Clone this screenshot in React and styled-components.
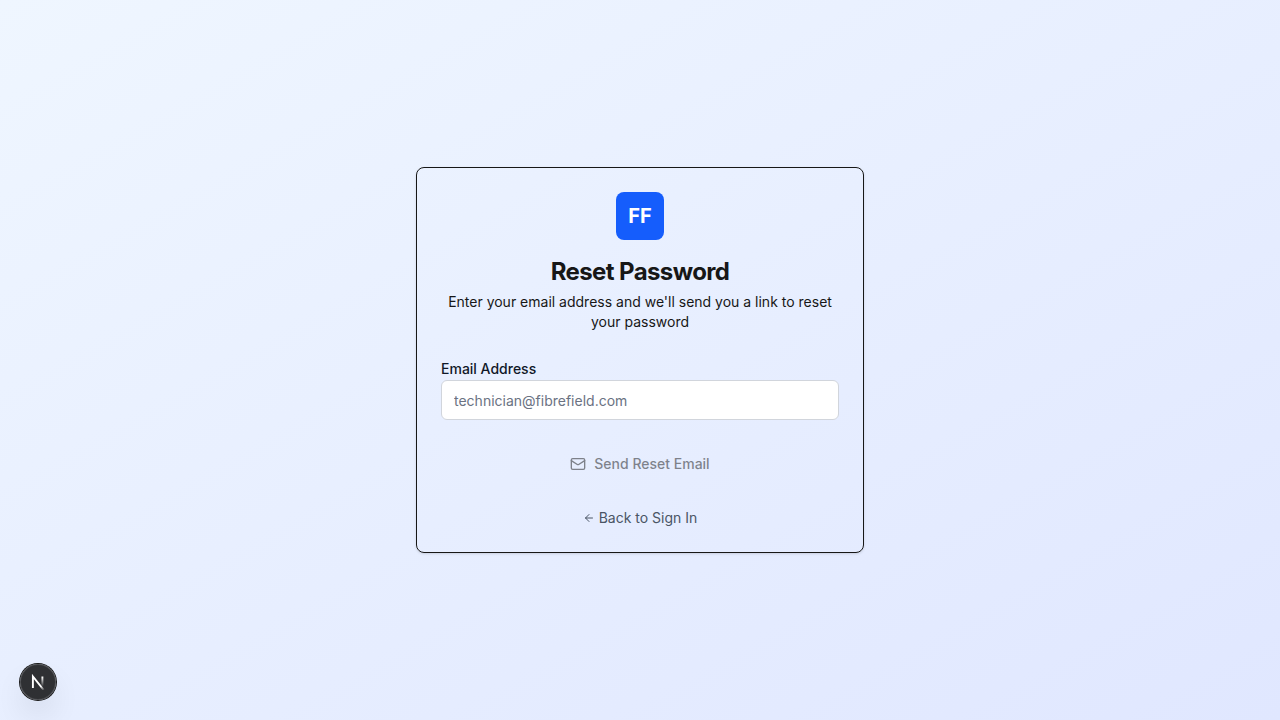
import React, { useState } from "react";
import styled, { createGlobalStyle } from "styled-components";
import { Mail, ArrowLeft } from "lucide-react";

const GlobalStyle = createGlobalStyle`
  *, *::before, *::after { box-sizing: border-box; }
  body {
    margin: 0;
    font-family: Inter, "Liberation Sans", sans-serif;
    font-size: 16px;
    line-height: 24px;
    color: #171717;
  }
`;

const Page = styled.main`
  min-height: 100vh;
  display: flex;
  align-items: center;
  justify-content: center;
  padding: 16px;
  background: linear-gradient(to bottom right, #eff6ff, #e0e7ff);
`;

const Card = styled.section`
  width: 100%;
  max-width: 448px;
  border: 1px solid #171717;
  border-radius: 8px;
  box-shadow: 0 1px 3px rgba(0, 0, 0, 0.1), 0 1px 2px -1px rgba(0, 0, 0, 0.1);
`;

const CardHeader = styled.header`
  display: flex;
  flex-direction: column;
  align-items: center;
  padding: 24px;
  text-align: center;
`;

const Logo = styled.div`
  display: flex;
  align-items: center;
  justify-content: center;
  width: 48px;
  height: 48px;
  margin-bottom: 16px;
  border-radius: 8px;
  background: #155dfc;
  color: #fff;
  font-size: 20px;
  line-height: 28px;
  font-weight: 700;
`;

const Title = styled.h1`
  margin: 0 0 4px;
  font-size: 24px;
  line-height: 32px;
  font-weight: 700;
  letter-spacing: -0.025em;
`;

const Description = styled.p`
  margin: 0;
  font-size: 14px;
  line-height: 20px;
`;

const CardBody = styled.div`
  display: flex;
  flex-direction: column;
  gap: 24px;
  padding: 0 24px 24px;
`;

const Form = styled.form`
  display: flex;
  flex-direction: column;
  gap: 24px;
`;

const Field = styled.div`
  display: flex;
  flex-direction: column;
  align-items: flex-start;
  padding-top: 2px;
`;

const Label = styled.label`
  font-size: 14px;
  line-height: 22px;
  font-weight: 500;
  color: #101828;
`;

const Input = styled.input`
  width: 100%;
  height: 40px;
  padding: 8px 12px;
  border: 1px solid #d1d5dc;
  border-radius: 6px;
  background: #fff;
  color: #171717;
  font: inherit;
  font-size: 14px;
  line-height: 20px;
  &::placeholder { color: #6a7282; opacity: 1; }
`;

const SubmitButton = styled.button`
  display: flex;
  align-items: center;
  justify-content: center;
  gap: 8px;
  width: 100%;
  height: 40px;
  padding: 8px 16px;
  border: 0;
  border-radius: 6px;
  background: transparent;
  color: #171717;
  font: inherit;
  font-size: 14px;
  line-height: 20px;
  font-weight: 500;
  &:disabled { opacity: 0.5; }
`;

const BackLink = styled.a`
  display: inline-flex;
  align-items: center;
  align-self: center;
  gap: 4px;
  color: #4a5565;
  font-size: 14px;
  line-height: 20px;
  text-decoration: none;
`;

const DevButton = styled.button`
  position: fixed;
  left: 20px;
  bottom: 20px;
  display: flex;
  align-items: center;
  justify-content: center;
  width: 36px;
  height: 36px;
  padding: 0;
  border: 0;
  border-radius: 50%;
  background: rgba(0, 0, 0, 0.8);
  box-shadow: 0 0 0 1px #171717, inset 0 0 0 1px rgba(255, 255, 255, 0.14), 0 16px 32px -8px rgba(0, 0, 0, 0.24);
`;

function NextMark() {
  return (
    <svg width="16" height="16" viewBox="-0.5 -1.5 16 16" fill="none" aria-hidden="true">
      <path d="M13.3 14.6L2.4 1V12.4" stroke="url(#diagonal)" strokeWidth="1.9" />
      <path d="M11.9 1V12.4" stroke="url(#stem)" strokeWidth="1.9" />
      <defs>
        <linearGradient id="diagonal" x1="9.95" y1="11.13" x2="15.16" y2="17.9" gradientUnits="userSpaceOnUse">
          <stop stopColor="white" />
          <stop offset="0.6" stopColor="white" stopOpacity="0" />
          <stop offset="1" stopColor="white" stopOpacity="0" />
        </linearGradient>
        <linearGradient id="stem" x1="11.82" y1="1.4" x2="11.79" y2="11" gradientUnits="userSpaceOnUse">
          <stop stopColor="white" />
          <stop offset="1" stopColor="white" stopOpacity="0" />
        </linearGradient>
      </defs>
    </svg>
  );
}

export default function App() {
  const [email, setEmail] = useState("");
  return (
    <>
      <GlobalStyle />
      <Page>
        <Card>
          <CardHeader>
            <Logo>FF</Logo>
            <Title>Reset Password</Title>
            <Description>Enter your email address and we'll send you a link to reset your password</Description>
          </CardHeader>
          <CardBody>
            <Form onSubmit={(event) => event.preventDefault()}>
              <Field>
                <Label htmlFor="email">Email Address</Label>
                <Input
                  id="email"
                  type="email"
                  placeholder="technician@fibrefield.com"
                  value={email}
                  onChange={(event) => setEmail(event.target.value)}
                />
              </Field>
              <SubmitButton type="submit" disabled={!email}>
                <Mail size={16} />
                Send Reset Email
              </SubmitButton>
            </Form>
            <BackLink href="#sign-in">
              <ArrowLeft size={12} />
              Back to Sign In
            </BackLink>
          </CardBody>
        </Card>
      </Page>
      <DevButton type="button" aria-label="Open developer tools">
        <NextMark />
      </DevButton>
    </>
  );
}
